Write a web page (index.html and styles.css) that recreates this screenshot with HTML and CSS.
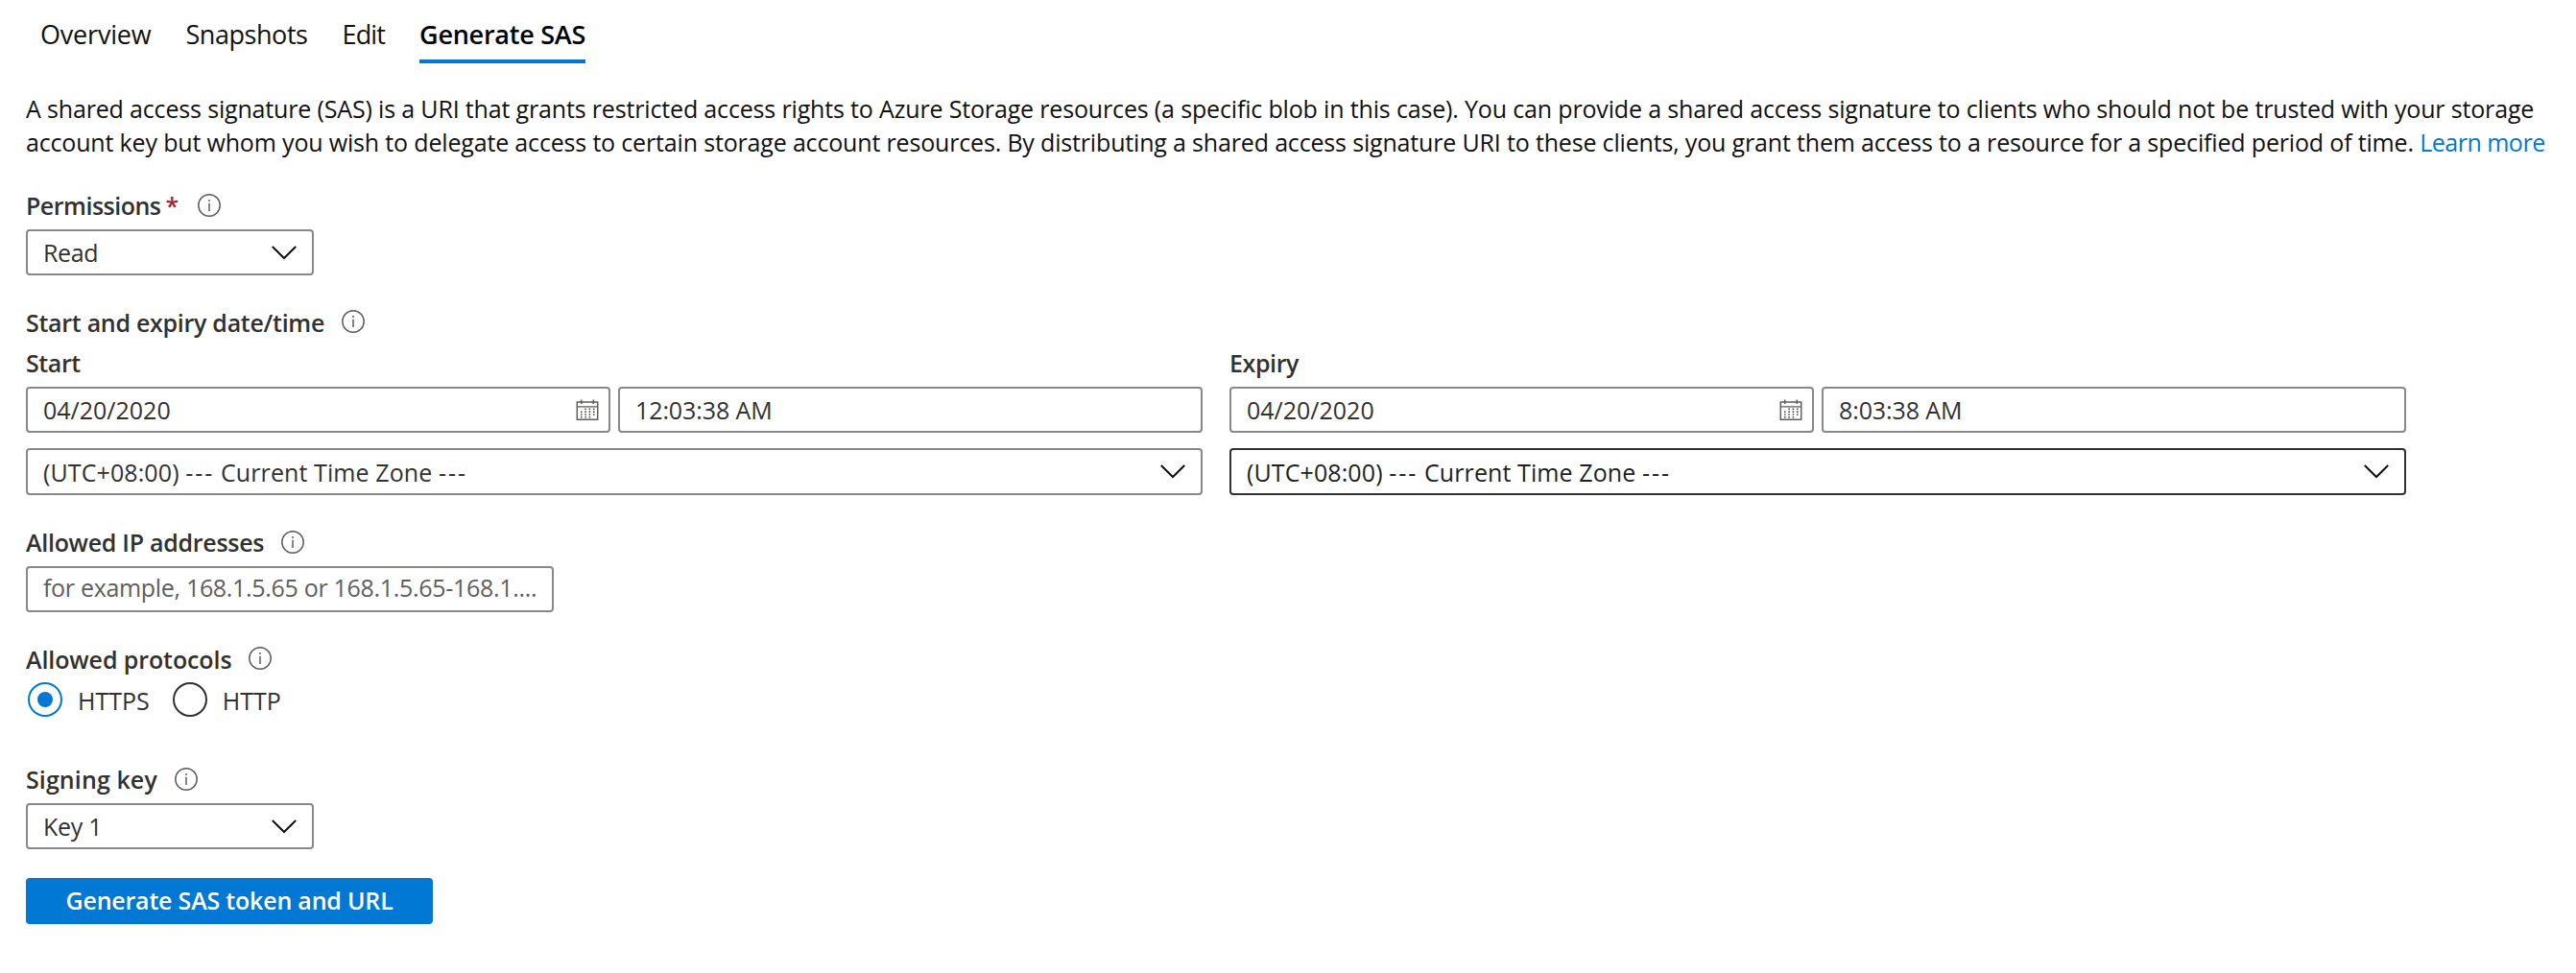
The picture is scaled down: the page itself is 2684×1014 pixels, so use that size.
FILE: index.html
```html
<!DOCTYPE html>
<html lang="en">
<head>
<meta charset="utf-8">
<title>Generate SAS</title>
<link rel="stylesheet" href="styles.css">
</head>
<body>
<svg class="sprite" aria-hidden="true">
  <symbol id="info" viewBox="0 0 24 24">
    <circle cx="12" cy="12" r="11.2" fill="none" stroke="#605e5c" stroke-width="1.5"/>
    <path d="M12 9.8V18M12 6V8" fill="none" stroke="#605e5c" stroke-width="1.5"/>
  </symbol>
  <symbol id="chevron" viewBox="0 0 26 15">
    <path d="M.8 1L13 13L25.2 1" fill="none" stroke="#111" stroke-width="2"/>
  </symbol>
  <symbol id="calendar" viewBox="0 0 24 24">
    <path d="M.8 3.2H23.2V22.2H.8ZM.8 8.2H23.2M5.5 .5V5.2M18.5 .5V5.2" fill="none" stroke="#605e5c" stroke-width="1.5"/>
    <path d="M5.5 13V21M10 10V21M14.5 10V21M19 10V18" fill="none" stroke="#484644" stroke-width="1.6" stroke-dasharray="1.6 1.3"/>
  </symbol>
</svg>

<nav class="tabs">
  <a class="tab tab-overview">Overview</a>
  <a class="tab tab-snapshots">Snapshots</a>
  <a class="tab tab-edit">Edit</a>
  <a class="tab tab-active">Generate SAS</a>
</nav>

<p class="intro">A shared access signature (SAS) is a URI that grants restricted access rights to Azure Storage resources (a specific blob in this case). You can provide a shared access signature to clients who should not be trusted with your storage<br><span class="intro-end">account key but whom you wish to delegate access to certain storage account resources. By distributing a shared access signature URI to these clients, you grant them access to a resource for a specified period of time. <a class="link">Learn more</a></span></p>

<main class="form">
  <section class="field permissions">
    <div class="label"><span class="label-permissions">Permissions</span><span class="required">*</span><svg class="info"><use href="#info"/></svg></div>
    <div class="box select small"><span class="value-read">Read</span><svg class="chevron"><use href="#chevron"/></svg></div>
  </section>

  <section class="field dates">
    <div class="label"><span class="label-dates">Start and expiry date/time</span><svg class="info info-up"><use href="#info"/></svg></div>
    <div class="columns">
      <div class="column">
        <div class="label"><span class="label-start">Start</span></div>
        <div class="pair">
          <div class="box date"><span>04/20/2020</span><svg class="calendar"><use href="#calendar"/></svg></div>
          <div class="box"><span class="value-time">12:03:38 AM</span></div>
        </div>
        <div class="box select zone"><span class="value-zone">(UTC+08:00) <span class="dashes">---</span> Current Time Zone <span class="dashes">---</span></span><svg class="chevron"><use href="#chevron"/></svg></div>
      </div>
      <div class="column">
        <div class="label"><span class="label-expiry">Expiry</span></div>
        <div class="pair">
          <div class="box date"><span>04/20/2020</span><svg class="calendar"><use href="#calendar"/></svg></div>
          <div class="box"><span class="value-time">8:03:38 AM</span></div>
        </div>
        <div class="box select zone focused"><span class="value-zone">(UTC+08:00) <span class="dashes">---</span> Current Time Zone <span class="dashes">---</span></span><svg class="chevron"><use href="#chevron"/></svg></div>
      </div>
    </div>
  </section>

  <section class="field addresses">
    <div class="label"><span class="label-ip">Allowed IP addresses</span><svg class="info"><use href="#info"/></svg></div>
    <div class="box ip"><span class="placeholder">for example, 168.1.5.65 or 168.1.5.65-168.1....</span></div>
  </section>

  <section class="field protocols">
    <div class="label"><span class="label-protocols">Allowed protocols</span><svg class="info info-up"><use href="#info"/></svg></div>
    <div class="radios">
      <span class="radio checked"></span><span class="radio-text">HTTPS</span>
      <span class="radio"></span><span class="radio-text">HTTP</span>
    </div>
  </section>

  <section class="field signing">
    <div class="label"><span class="label-signing">Signing key</span><svg class="info"><use href="#info"/></svg></div>
    <div class="box select small"><span class="value-key">Key 1</span><svg class="chevron"><use href="#chevron"/></svg></div>
  </section>

  <button class="generate" type="button">Generate SAS token and URL</button>
</main>
</body>
</html>
```
FILE: styles.css
```css
* { box-sizing: border-box; }
body {
  margin: 0;
  padding-left: 27px;
  background: #fff;
  color: #323130;
  font: 25px/34px "Open Sans", "Noto Sans", sans-serif;
}
.sprite { display: none; }
svg { display: block; flex: none; }

.tabs { display: flex; gap: 36px; height: 66px; padding-left: 15px; }
.tab { padding-top: 18px; font-size: 27px; line-height: 36px; color: #111; }
.tab-overview { letter-spacing: -.2px; }
.tab-snapshots { letter-spacing: -.45px; }
.tab-edit { letter-spacing: -.85px; }
.tab-active {
  color: #000;
  font-weight: 600;
  letter-spacing: -.25px;
  border-bottom: 4px solid #0078d4;
}

.intro { margin: 30px 0 0; line-height: 35px; color: #111; white-space: nowrap; letter-spacing: -.16px; }
.intro-end { letter-spacing: -.168px; }
.link { color: #0078d4; letter-spacing: -.5px; }

.label { display: flex; align-items: center; height: 34px; font-weight: 600; }
.info { width: 24px; height: 24px; margin-left: 18px; }
.info-up { margin-bottom: 2px; }
.required { margin-left: 5px; width: 15px; color: #a4262c; }
.label-permissions { letter-spacing: -.5px; }
.label-dates { letter-spacing: -.28px; }
.label-start, .label-expiry { letter-spacing: -.4px; }
.label-ip { letter-spacing: -.28px; }
.label-protocols { letter-spacing: -.1px; }
.label-signing { letter-spacing: .1px; }

.box {
  display: flex;
  align-items: center;
  justify-content: space-between;
  height: 48px;
  padding: 0 16px;
  border: 2px solid #8a8886;
  border-radius: 4px;
  white-space: nowrap;
}
.small { width: 300px; }
.chevron { width: 26px; height: 15px; }
.calendar { width: 24px; height: 23px; }
.date { padding-right: 10px; }
.focused { border-color: #323130; color: #201f1e; }
.value-read { letter-spacing: -.4px; }
.value-time { letter-spacing: -.1px; }
.value-key { letter-spacing: -.3px; }
.value-zone { letter-spacing: .1px; }
.dashes { letter-spacing: 2px; }

.permissions { margin-top: 31px; }
.permissions .box, .signing .box, .addresses .box { margin-top: 8px; }

.dates { margin-top: 32px; }
.columns { display: grid; grid-template-columns: 1226px 1226px; gap: 28px; margin-top: 8px; }
.pair { display: grid; grid-template-columns: 1fr 1fr; gap: 8px; margin-top: 8px; }
.zone { height: 49px; margin-top: 16px; }

.addresses { margin-top: 32px; }
.ip { width: 550px; padding-bottom: 4px; }
.placeholder { color: #605e5c; letter-spacing: -.31px; }

.protocols { margin-top: 32px; }
.radios { display: flex; align-items: center; height: 36px; margin-top: 7px; padding-left: 2px; }
.radio { display: grid; place-items: center; width: 36px; height: 36px; border: 2px solid #323130; border-radius: 50%; }
.radio-text { margin: 1px 24px 0 16px; }
.checked { border-color: #0078d4; }
.checked::after { content: ""; width: 16px; height: 16px; border-radius: 50%; background: #0078d4; }

.signing { margin-top: 48px; }
.generate {
  display: block;
  width: 424px;
  height: 48px;
  margin-top: 30px;
  padding: 0 0 3px;
  border: 0;
  border-radius: 4px;
  background: #0078d4;
  color: #fff;
  font: 600 25px/34px "Open Sans", "Noto Sans", sans-serif;
  letter-spacing: -.2px;
}
```
